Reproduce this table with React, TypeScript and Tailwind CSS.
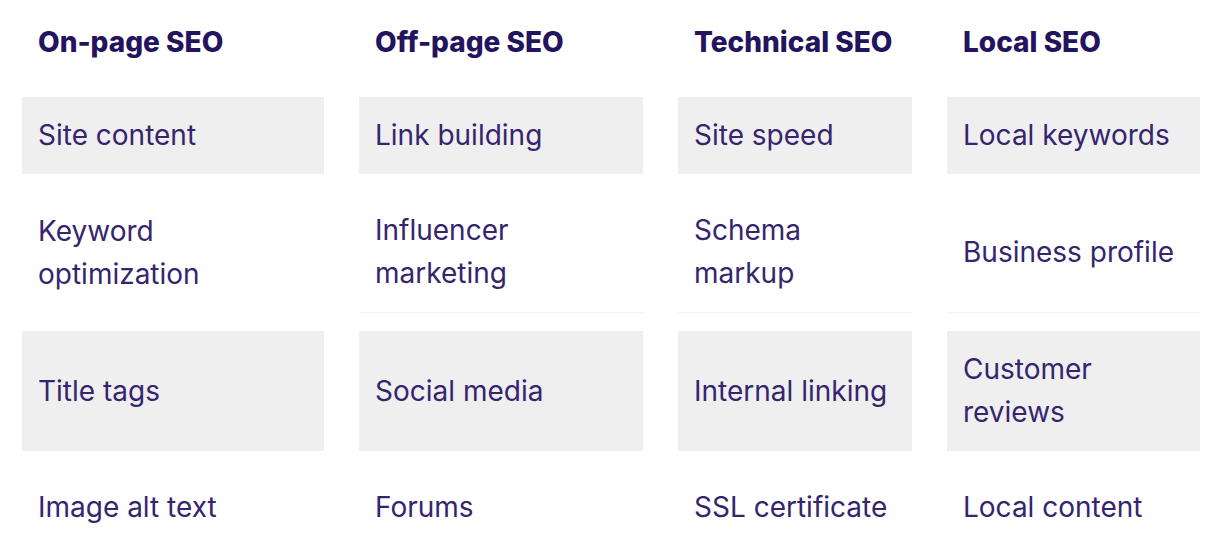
const columns = [
  {
    title: "On-page SEO",
    items: ["Site content", "Keyword optimization", "Title tags", "Image alt text"],
  },
  {
    title: "Off-page SEO",
    items: ["Link building", "Influencer marketing", "Social media", "Forums"],
  },
  {
    title: "Technical SEO",
    items: ["Site speed", "Schema markup", "Internal linking", "SSL certificate"],
  },
  {
    title: "Local SEO",
    items: ["Local keywords", "Business profile", "Customer reviews", "Local content"],
  },
];

export default function App() {
  return (
    <div className="h-[558px] w-[1222px] overflow-hidden bg-white font-['Inter',sans-serif]">
      <div className="ml-[22px] grid grid-cols-[302px_284px_234px_253px] gap-x-[35px] gap-y-[18px]">
        {columns.map((col) => (
          <div
            key={col.title}
            className="flex h-[79px] items-center whitespace-nowrap px-[16px] pt-[5px] text-[28px] font-extrabold leading-[43px] text-[#24145e]"
          >
            {col.title}
          </div>
        ))}
        {[0, 1, 2, 3].map((row) =>
          columns.map((col, ci) => (
            <div
              key={`${row}-${ci}`}
              className={`flex items-center px-[16px] py-[17px] text-[28px] leading-[43px] text-[#35256e] ${
                row % 2 === 0 ? "bg-[#efefef]" : ""
              } ${row === 1 && ci > 0 ? "border-b border-[#f3f3f3]" : ""}`}
            >
              {col.items[row]}
            </div>
          ))
        )}
      </div>
    </div>
  );
}
